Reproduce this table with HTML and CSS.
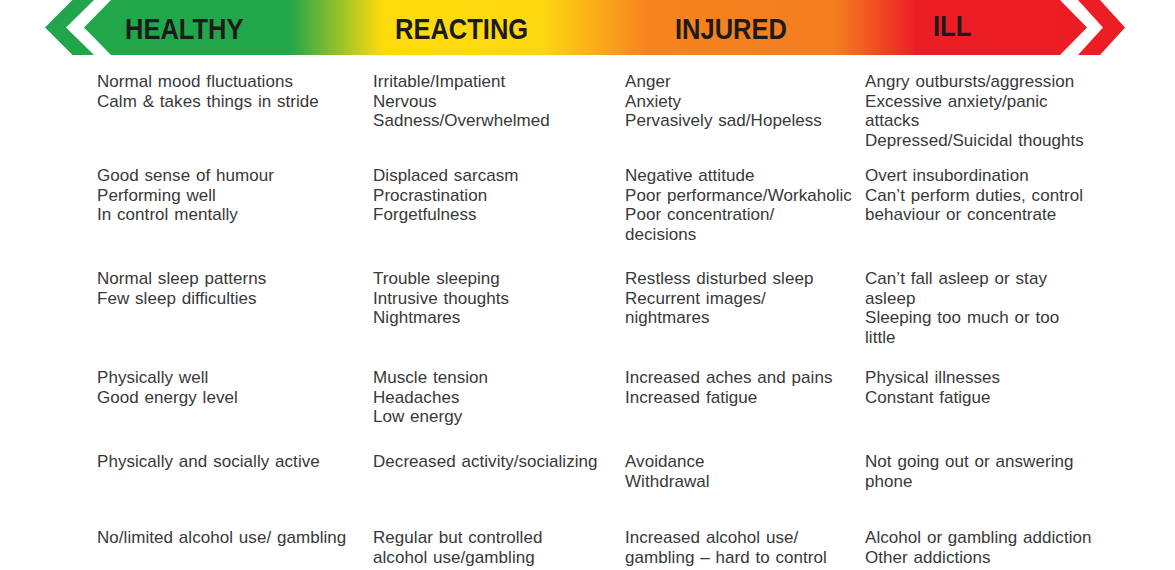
FILE: index.html
```html
<!DOCTYPE html>
<html lang="en">
<head>
<meta charset="utf-8">
<title>Mental Health Continuum</title>
<link rel="stylesheet" href="styles.css">
</head>
<body>
<header class="scale">
  <div class="chev chev-left"></div>
  <div class="band">
    <span class="label">HEALTHY</span>
    <span class="label">REACTING</span>
    <span class="label">INJURED</span>
    <span class="label label-ill">ILL</span>
  </div>
  <div class="chev chev-right"></div>
</header>
<main class="grid">
  <p class="cell">Normal mood fluctuations<br>Calm &amp; takes things in stride</p>
  <p class="cell">Irritable/Impatient<br>Nervous<br>Sadness/Overwhelmed</p>
  <p class="cell">Anger<br>Anxiety<br>Pervasively sad/Hopeless</p>
  <p class="cell">Angry outbursts/aggression<br>Excessive anxiety/panic<br>attacks<br>Depressed/Suicidal thoughts</p>

  <p class="cell">Good sense of humour<br>Performing well<br>In control mentally</p>
  <p class="cell">Displaced sarcasm<br>Procrastination<br>Forgetfulness</p>
  <p class="cell">Negative attitude<br>Poor performance/Workaholic<br>Poor concentration/<br>decisions</p>
  <p class="cell">Overt insubordination<br>Can’t perform duties, control<br>behaviour or concentrate</p>

  <p class="cell">Normal sleep patterns<br>Few sleep difficulties</p>
  <p class="cell">Trouble sleeping<br>Intrusive thoughts<br>Nightmares</p>
  <p class="cell">Restless disturbed sleep<br>Recurrent images/<br>nightmares</p>
  <p class="cell">Can’t fall asleep or stay<br>asleep<br>Sleeping too much or too<br>little</p>

  <p class="cell">Physically well<br>Good energy level</p>
  <p class="cell">Muscle tension<br>Headaches<br>Low energy</p>
  <p class="cell">Increased aches and pains<br>Increased fatigue</p>
  <p class="cell">Physical illnesses<br>Constant fatigue</p>

  <p class="cell">Physically and socially active</p>
  <p class="cell">Decreased activity/socializing</p>
  <p class="cell">Avoidance<br>Withdrawal</p>
  <p class="cell">Not going out or answering<br>phone</p>

  <p class="cell">No/limited alcohol use/ gambling</p>
  <p class="cell">Regular but controlled<br>alcohol use/gambling</p>
  <p class="cell">Increased alcohol use/<br>gambling – hard to control</p>
  <p class="cell">Alcohol or gambling addiction<br>Other addictions</p>
</main>
</body>
</html>
```
FILE: styles.css
```css
html, body {
  margin: 0;
  padding: 0;
  background: #ffffff;
}

body {
  width: 1175px;
  height: 570px;
  overflow: hidden;
  font-family: "Liberation Sans", Arial, sans-serif;
}

.scale {
  display: flex;
  height: 55px;
}

.chev {
  height: 55px;
  flex: none;
}

.chev-left {
  width: 49px;
  margin-left: 45px;
  background: #21a54a;
  clip-path: polygon(27.5px 0, 49px 0, 21px 27.5px, 49px 55px, 27.5px 55px, 0 27.5px);
}

.chev-right {
  width: 47px;
  margin-left: -9px;
  background: #ec1d25;
  clip-path: polygon(0 0, 22px 0, 47px 27.5px, 22px 55px, 0 55px, 25px 27.5px);
}

.band {
  flex: none;
  width: 1003px;
  height: 55px;
  margin-left: -10px;
  box-sizing: border-box;
  padding-left: 41px;
  display: grid;
  grid-template-columns: 270px 280px 258px auto;
  align-items: center;
  background: linear-gradient(90deg,
    #22a64a 0%,
    #22a64a 20.5%,
    #fedb0c 29.8%,
    #fed80f 45.5%,
    #f5841f 56.1%,
    #f47d20 74.9%,
    #ec1d25 83.1%,
    #ec1c24 100%);
  clip-path: polygon(27px 0, 976px 0, 1003px 27.5px, 976px 55px, 27px 55px, 0 27.5px);
}

.label {
  display: inline-block;
  justify-self: start;
  font-size: 30px;
  font-weight: 700;
  line-height: 30px;
  color: #1b1b1b;
  transform: scaleX(0.85);
  transform-origin: left center;
  margin-top: 2px;
}

.label-ill {
  margin-top: -3px;
}

.grid {
  display: grid;
  margin-top: 17px;
  padding-left: 97px;
  grid-template-columns: 276px 252px 240px auto;
  grid-template-rows: 94px 103px 99px 84px 76px auto;
}

.cell {
  margin: 0;
  font-size: 17px;
  line-height: 19.7px;
  letter-spacing: 0.05px;
  word-spacing: 1px;
  color: #383838;
  white-space: nowrap;
}
```
